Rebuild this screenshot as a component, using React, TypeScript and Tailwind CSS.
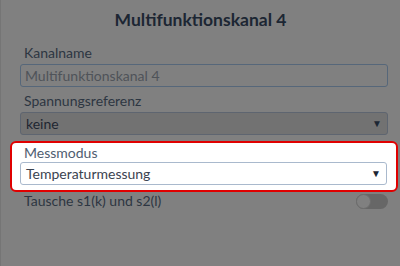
export default function App() {
  return (
    <div
      className="w-[400px] h-[266px] overflow-hidden bg-[#808080] border-l border-[#757575]"
      style={{ fontFamily: 'Lato, "Noto Sans", sans-serif' }}
    >
      {/* Title */}
      <div className="h-[42px] pt-[9px] text-center text-[17.5px] font-bold leading-[22px] text-[#1c2633]">
        Multifunktionskanal 4
      </div>

      <div className="pl-[19px] pr-[12px] flex flex-col">
        {/* Kanalname */}
        <label className="pl-[4px] text-[14px] leading-[22px] text-[#2d3642]">Kanalname</label>
        <div className="h-[23px] border border-[#56677a] rounded-[3px] bg-[#808080] flex items-center px-[4px] text-[14px] text-[#4f5359]">
          Multifunktionskanal 4
        </div>

        {/* Spannungsreferenz */}
        <label className="mt-[3px] pl-[4px] text-[14px] leading-[22px] text-[#2d3642]">Spannungsreferenz</label>
        <div className="h-[23px] border border-[#5e6570] rounded-[3px] bg-[#727272] flex items-center justify-between px-[5px] text-[14px] text-[#1e2631]">
          <span>keine</span>
          <span className="text-[10px] text-[#1c2633]">▼</span>
        </div>
      </div>

      {/* Messmodus highlighted */}
      <div className="mt-[6px] ml-[9px] mr-[2px] h-[51px] border-2 border-[#e00000] rounded-[6px] bg-white pl-[8px] pr-[9px] flex flex-col">
        <label className="pl-[4px] text-[14px] leading-[18px] pt-[1px] text-[#4f5d70]">Messmodus</label>
        <div className="h-[23px] border border-[#a9b9cd] rounded-[3px] bg-white flex items-center justify-between px-[5px] text-[14px] text-[#3b4350]">
          <span>Temperaturmessung</span>
          <span className="text-[10px] text-[#1c2633]">▼</span>
        </div>
      </div>

      {/* Tausche */}
      <div className="mt-[-2px] pl-[19px] pr-[12px] flex items-center justify-between">
        <span className="pl-[4px] text-[14px] leading-[22px] text-[#2d3642]">Tausche s1(k) und s2(l)</span>
        <span className="w-[32px] h-[15px] rounded-full bg-[#676767] relative">
          <span className="absolute left-0 top-0 w-[15px] h-[15px] rounded-full bg-[#808080] border border-[#6d6d6d]" />
        </span>
      </div>
    </div>
  );
}
